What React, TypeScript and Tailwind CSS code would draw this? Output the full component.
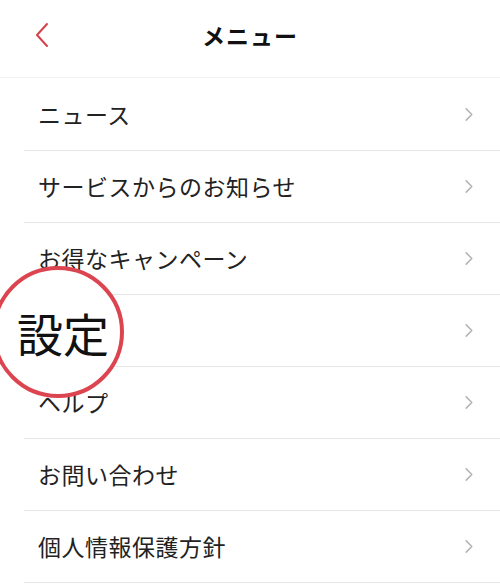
import React from 'react';

const items = [
  'ニュース',
  'サービスからのお知らせ',
  'お得なキャンペーン',
  '設定',
  'ヘルプ',
  'お問い合わせ',
  '個人情報保護方針',
];

const Chevron = ({ className }: { className?: string }) => (
  <svg viewBox="0 0 10 16" className={className} fill="none" stroke="currentColor" strokeWidth="1.6" strokeLinecap="round" strokeLinejoin="round">
    <path d="M2 2l6 6-6 6" />
  </svg>
);

export default function App() {
  return (
    <div
      className="relative w-[500px] h-[586px] overflow-hidden bg-white text-[#222]"
      style={{ fontFamily: '"Noto Sans CJK JP", "Noto Sans", sans-serif' }}
    >
      {/* Header */}
      <div className="relative flex h-[78px] items-center justify-center border-b border-[#f2f2f2]">
        <button className="absolute left-[34px] top-[22px] text-[#d6404a]">
          <svg viewBox="0 0 16 26" className="h-[26px] w-[16px]" fill="none" stroke="currentColor" strokeWidth="2" strokeLinecap="round" strokeLinejoin="round">
            <path d="M13 2L3 13l10 11" />
          </svg>
        </button>
        <h1 className="-mt-[6px] text-[23px] font-bold tracking-[1px] text-[#111]">メニュー</h1>
      </div>

      {/* Menu list */}
      <ul className="pt-px">
        {items.map((label) => (
          <li key={label} className="ml-6 flex h-[72px] items-center justify-between border-b border-[#e6e6e6] pl-[14px] pr-[26px]">
            <span className="text-[23px] leading-none tracking-[0.5px]">{label}</span>
            <Chevron className="h-[15px] w-[10px] text-[#b3b3b3]" />
          </li>
        ))}
      </ul>

      {/* Highlight callout */}
      <div className="absolute left-[-8px] top-[266px] flex h-[132px] w-[132px] items-center justify-center rounded-full border-[4px] border-[#dc4550] bg-white">
        <span className="ml-[10px] text-[46px] leading-none text-[#111]">設定</span>
      </div>
    </div>
  );
}
